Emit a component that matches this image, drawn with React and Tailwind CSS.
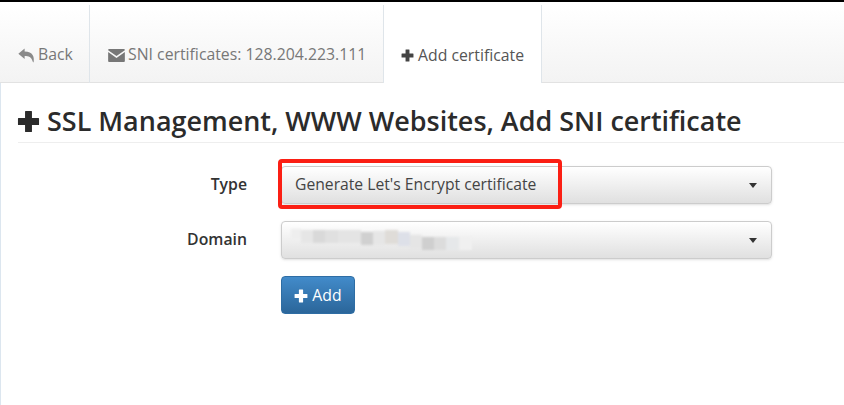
const tabClass = "flex items-center pt-[23px] bg-linear-to-b from-white to-[#f3f3f3] border-b border-[#e2e2e2]";

function Plus({ className }) {
  return (
    <svg viewBox="0 0 24 24" fill="currentColor" className={className}>
      <path d="M9 1h6a.6.6 0 0 1 .6.6V8.4h6.8a.6.6 0 0 1 .6.6v6a.6.6 0 0 1-.6.6h-6.8v6.8a.6.6 0 0 1-.6.6H9a.6.6 0 0 1-.6-.6v-6.8H1.6A.6.6 0 0 1 1 15V9a.6.6 0 0 1 .6-.6h6.8V1.6A.6.6 0 0 1 9 1z" />
    </svg>
  );
}

function Reply({ className }) {
  return (
    <svg viewBox="0 0 18 16" fill="currentColor" className={className}>
      <path d="M7 .6.3 6.2 7 11.8V8.4c4.3 0 7.3.9 8.6 5.9.3.7.6 1 1 .9.9-5.6-.6-11.4-9.6-11.4z" />
    </svg>
  );
}

function Mail({ className }) {
  return (
    <svg viewBox="0 0 18 14" fill="currentColor" className={className}>
      <path d="M1 0h16a1 1 0 0 1 1 1v.4L9 7.6 0 1.4V1a1 1 0 0 1 1-1zM0 3.2V13a1 1 0 0 0 1 1h16a1 1 0 0 0 1-1V3.2L9 9.6z" />
    </svg>
  );
}

function Caret() {
  return <span className="ml-auto w-0 h-0 border-x-4 border-x-transparent border-t-[5px] border-t-[#333]" />;
}

export default function App() {
  return (
    <div className="relative w-[844px] h-[405px] overflow-hidden bg-white font-['Open_Sans',sans-serif] text-[#333]">
      <div className="h-[2px] bg-black" />

      {/* tabs */}
      <div className="flex h-[81px] text-[15.8px] text-[#777] bg-linear-to-b from-white to-[#f8f8f8] pt-[3px]">
        <div className={`${tabClass} w-[89px] pl-[18px] gap-[3px]`}>
          <Reply className="w-[17px] h-[15px] text-[#8a8a8a]" />
          Back
        </div>
        <div className="w-px bg-[#dfe5ea]" />
        <div className={`${tabClass} w-[293px] pl-[18px] gap-[3px]`}>
          <Mail className="w-[17px] h-[13px] text-[#777]" />
          SNI certificates: 128.204.223.111
        </div>
        <div className="w-px bg-[#dfe5ea]" />
        <div className="flex items-center pt-[23px] w-[157px] pl-[17px] gap-[4px] bg-white text-[#555]">
          <Plus className="w-[13px] h-[13px] text-[#444]" />
          Add certificate
        </div>
        <div className="w-px bg-[#dfe5ea]" />
        <div className={`${tabClass} flex-1`} />
      </div>

      {/* page */}
      <div className="flex flex-col pl-[17px] border-l border-l-[#dce6ef] h-[322px]">
        <div className="flex items-center gap-[7px] h-[60px] pt-[17px] border-b border-[#eeeeee] text-[26.96px] font-semibold text-[#2b2b2b]">
          <Plus className="w-[23px] h-[23px] mt-[1px] -ml-[1px] text-[#2b2b2b]" />
          SSL Management, WWW Websites, Add SNI certificate
        </div>

        <div className="grid grid-cols-[229px_491px] gap-x-[34px] gap-y-[17px] mt-[23px] text-[15.8px]">
          <div className="flex items-center justify-end font-semibold">Type</div>
          <div className="flex items-center h-[38px] pl-[13px] pr-[14px] rounded-[4px] border border-[#ccc] bg-linear-to-b from-white to-[#e0e0e0] shadow-sm text-[15.7px] text-[#444]">
            Generate Let's Encrypt certificate
            <Caret />
          </div>

          <div className="flex items-center justify-end font-semibold">Domain</div>
          <div className="flex items-center h-[38px] px-[14px] rounded-[4px] border border-[#ccc] bg-linear-to-b from-white to-[#e0e0e0] shadow-sm">
            <div className="flex items-start h-[24px] -ml-[5px] blur-[1px]">
              <span className="w-[10px] h-[10px] mt-[1px] bg-[#eeeeee]" />
              <span className="w-[12px] h-[13px] mt-[2px] bg-[#e6e6e6]" />
              <span className="w-[12px] h-[13px] mt-[2px] bg-[#d9d9d9]" />
              <span className="w-[13px] h-[13px] mt-[2px] bg-[#e0e0e0]" />
              <span className="w-[23px] h-[13px] mt-[2px] bg-[#e4e4e4]" />
              <span className="w-[12px] h-[13px] mt-[4px] bg-[#d0d0d0]" />
              <span className="w-[12px] h-[14px] mt-[3px] bg-[#e6e6e6]" />
              <span className="w-[13px] h-[14px] mt-[2px] bg-[#dfdcd8]" />
              <span className="w-[12px] h-[14px] mt-[4px] bg-[#dde0e8]" />
              <span className="w-[12px] h-[14px] mt-[7px] bg-[#e5e5e5]" />
              <span className="w-[12px] h-[13px] mt-[9px] bg-[#cfcfcf]" />
              <span className="w-[12px] h-[13px] mt-[9px] bg-[#dcdcdc]" />
              <span className="w-[13px] h-[13px] mt-[9px] bg-[#e6e8ea]" />
              <span className="w-[13px] h-[13px] mt-[9px] bg-[#f0f0f0]" />
            </div>
            <Caret />
          </div>

          <div />
          <div className="flex">
            <div className="flex items-center justify-center gap-[4px] w-[74px] h-[38px] pt-[1px] rounded-[4px] border border-[#2e6da4] bg-linear-to-b from-[#428bca] to-[#2b669a] text-white">
              <Plus className="w-[14px] h-[14px]" />
              Add
            </div>
          </div>
        </div>
      </div>

      {/* annotation box */}
      <div className="absolute left-[278px] top-[159px] w-[284px] h-[50px] border-4 border-[#fb1f14] rounded-[4px]" />
    </div>
  );
}
